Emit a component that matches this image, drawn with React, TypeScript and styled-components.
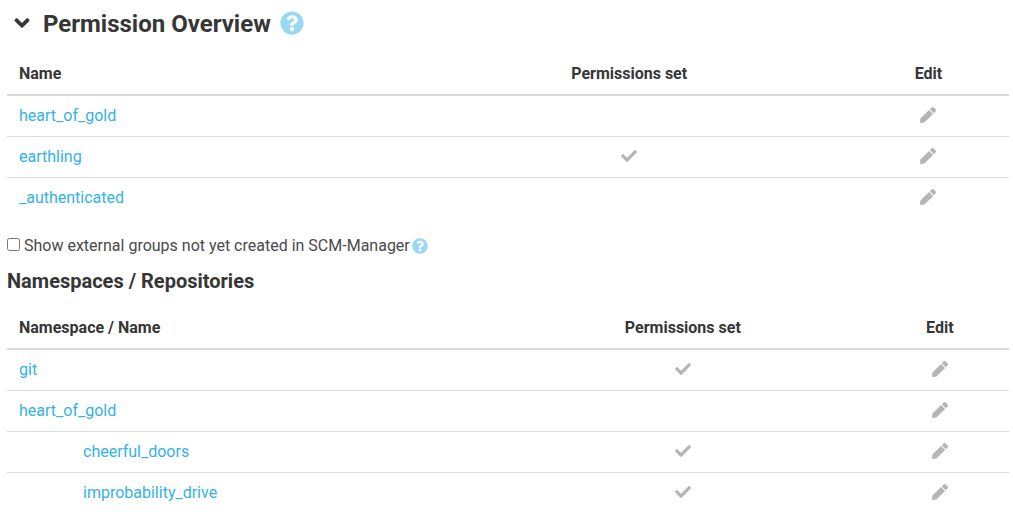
import React from "react";
import styled, { createGlobalStyle } from "styled-components";
import { FaAngleDown, FaCheck, FaPen, FaQuestionCircle } from "react-icons/fa";

const GlobalStyle = createGlobalStyle`
  * { box-sizing: border-box; }
  body {
    margin: 0;
    background: #fff;
    color: #4a4a4a;
    font: 16px/24px Roboto, "Liberation Sans", sans-serif;
  }
`;

const Page = styled.main`
  padding: 8px 4px 0 7px;
`;

const Header = styled.header`
  display: flex;
  align-items: flex-start;
  height: 32px;
  margin-bottom: 14px;
`;

const Title = styled.h2`
  margin: 0 9px 0 6px;
  color: #363636;
  font-size: 24px;
  line-height: 32px;
  font-weight: 700;
`;

const Subtitle = styled.h3`
  margin: 11px 0 15px;
  color: #363636;
  font-size: 20px;
  line-height: 24px;
  font-weight: 700;
`;

const IconButton = styled.button<{ $large?: boolean; $color: string }>`
  display: inline-flex;
  align-items: center;
  justify-content: center;
  height: ${(p) => (p.$large ? 30 : 22)}px;
  padding: 0;
  border: 0;
  background: none;
  color: ${(p) => p.$color};
  font-size: ${(p) => (p.$large ? 24 : 16)}px;
  vertical-align: top;
  cursor: pointer;
`;

const Collapse = styled(IconButton)`
  width: 30px;
`;

const Table = styled.table`
  width: 100%;
  border-collapse: collapse;
`;

const HeadCell = styled.th<{ $center?: boolean; $width?: string }>`
  width: ${(p) => p.$width ?? "auto"};
  padding: 8px 12px;
  border-bottom: 2px solid #dbdbdb;
  color: #363636;
  font-weight: 700;
  text-align: ${(p) => (p.$center ? "center" : "left")};
`;

const Cell = styled.td<{ $center?: boolean; $nested?: boolean }>`
  padding: 8px 12px 8px ${(p) => (p.$nested ? 76 : 12)}px;
  text-align: ${(p) => (p.$center ? "center" : "left")};
  vertical-align: top;
`;

const Check = styled(FaCheck)`
  display: block;
  margin: 3px auto 0;
  color: #b5b5b5;
`;

const Row = styled.tr`
  &:not(:last-child) ${Cell} {
    border-bottom: 1px solid #dbdbdb;
  }
`;

const Link = styled.a`
  color: #33b2e8;
  text-decoration: none;
`;

const Option = styled.div`
  display: flex;
  align-items: center;
  margin-top: 16px;
`;

const OptionLabel = styled.label`
  display: flex;
  align-items: center;
  gap: 4px;
  margin-right: 2px;
`;

const Checkbox = styled.input`
  width: 13px;
  height: 13px;
  margin: 0 0 3px;
`;

type Entry = { name: string; set?: boolean; nested?: boolean };

const groups: Entry[] = [
  { name: "heart_of_gold" },
  { name: "earthling", set: true },
  { name: "_authenticated" },
];

const repositories: Entry[] = [
  { name: "git", set: true },
  { name: "heart_of_gold" },
  { name: "cheerful_doors", set: true, nested: true },
  { name: "improbability_drive", set: true, nested: true },
];

function PermissionTable({
  label,
  entries,
  widths = [],
}: {
  label: string;
  entries: Entry[];
  widths?: string[];
}) {
  return (
    <Table>
      <thead>
        <tr>
          <HeadCell $width={widths[0]}>{label}</HeadCell>
          <HeadCell $center $width={widths[1]}>Permissions set</HeadCell>
          <HeadCell $center $width={widths[2]}>Edit</HeadCell>
        </tr>
      </thead>
      <tbody>
        {entries.map((e) => (
          <Row key={e.name}>
            <Cell $nested={e.nested}>
              <Link href="#">{e.name}</Link>
            </Cell>
            <Cell $center>{e.set && <Check aria-label="Permissions set" />}</Cell>
            <Cell $center>
              <IconButton $color="#b5b5b5" aria-label={`Edit ${e.name}`}>
                <FaPen />
              </IconButton>
            </Cell>
          </Row>
        ))}
      </tbody>
    </Table>
  );
}

export default function App() {
  return (
    <>
      <GlobalStyle />
      <Page>
        <Header>
          <Collapse $large $color="#363636" aria-label="Collapse">
            <FaAngleDown />
          </Collapse>
          <Title>Permission Overview</Title>
          <IconButton $large $color="#98d8f3" aria-label="Help">
            <FaQuestionCircle />
          </IconButton>
        </Header>
        <PermissionTable label="Name" entries={groups} />
        <Option>
          <OptionLabel>
            <Checkbox type="checkbox" />
            Show external groups not yet created in SCM-Manager
          </OptionLabel>
          <IconButton $color="#98d8f3" aria-label="Help">
            <FaQuestionCircle />
          </IconButton>
        </Option>
        <Subtitle>Namespaces / Repositories</Subtitle>
        <PermissionTable
          label="Namespace / Name"
          entries={repositories}
          widths={["48.7%", "37.5%", "13.8%"]}
        />
      </Page>
    </>
  );
}
